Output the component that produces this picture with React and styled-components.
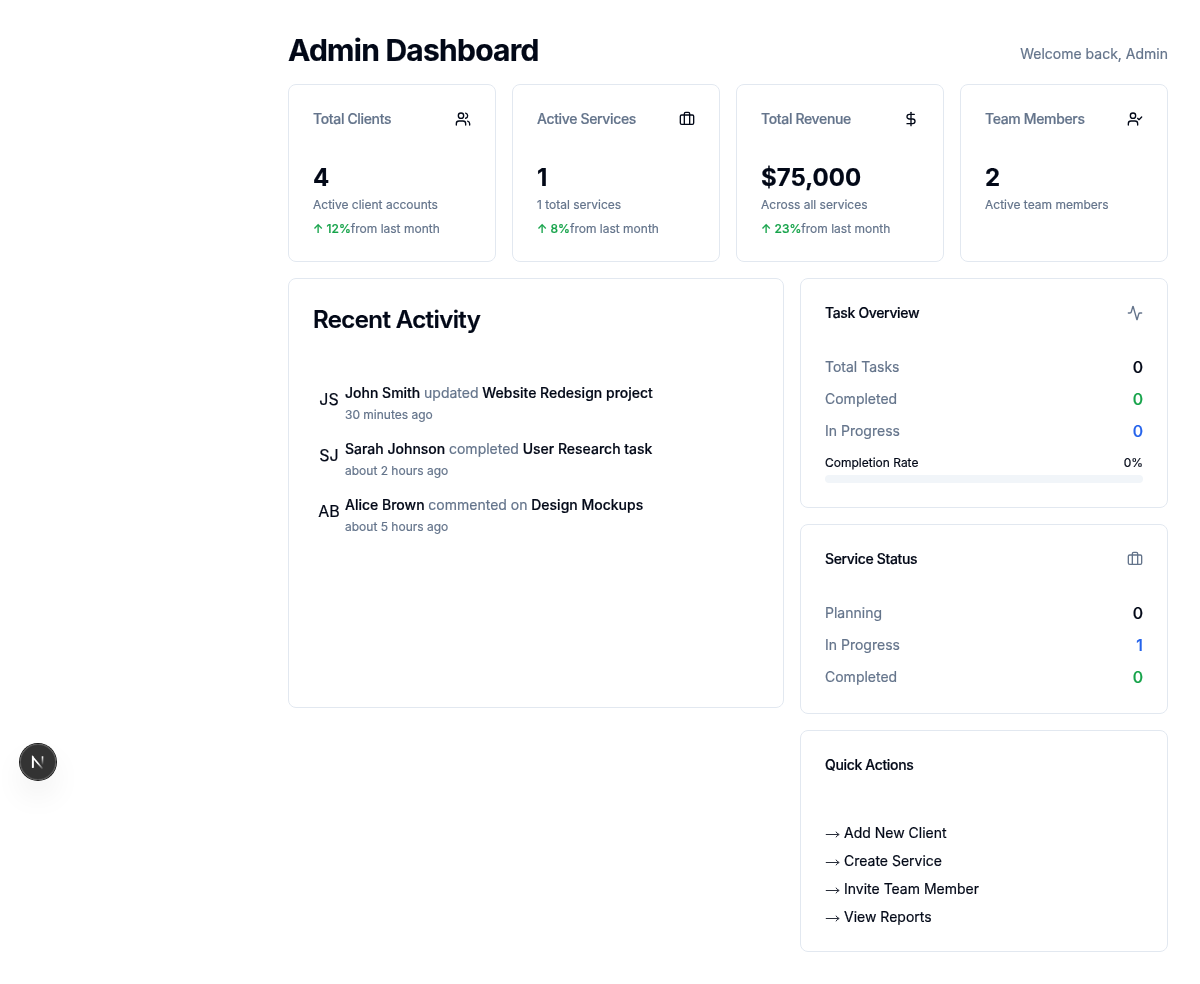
import React from 'react';
import styled, { createGlobalStyle } from 'styled-components';
import { Users, Briefcase, DollarSign, UserCheck, Activity } from 'lucide-react';

const GlobalStyle = createGlobalStyle`
  *, *::before, *::after { box-sizing: border-box; }
  body { margin: 0; background: #fff; color: #020817; font-family: Inter, sans-serif; font-size: 16px; line-height: 24px; -webkit-text-stroke: 0.2px; }
  h1, h2, h3, p { margin: 0; }
`;

const Main = styled.main`
  margin-left: 256px;
  padding: 32px;
  display: flex;
  flex-direction: column;
  gap: 16px;
  will-change: transform;
`;
const Header = styled.header`
  display: flex;
  justify-content: space-between;
  align-items: center;
`;
const Title = styled.h1`
  font-size: 30px;
  line-height: 36px;
  font-weight: 700;
  letter-spacing: -0.75px;
`;
const Welcome = styled.p`
  font-size: 14px;
  line-height: 20px;
  color: #64748b;
  padding-top: 8px;
`;
const Stats = styled.section`
  display: grid;
  grid-template-columns: repeat(4, 1fr);
  gap: 16px;
`;
const Card = styled.section`
  border: 1px solid #e2e8f0;
  border-radius: 8px;
  padding: 24px;
  height: ${(p) => p.$height}px;
`;
const CardHead = styled.div`
  display: flex;
  align-items: center;
  justify-content: space-between;
  height: 20px;
  margin-bottom: ${(p) => p.$space}px;
  color: ${(p) => p.$iconColor || 'inherit'};
`;
const CardTitle = styled.h3`
  font-size: 14px;
  line-height: 20px;
  font-weight: 500;
  letter-spacing: -0.35px;
  color: ${(p) => (p.$muted ? '#64748b' : '#020817')};
`;
const StatValue = styled.div`
  font-size: 24px;
  line-height: 32px;
  height: 32px;
  padding-top: 1px;
  font-weight: 700;
`;
const Caption = styled.p`
  font-size: 12px;
  line-height: 16px;
  color: #64748b;
  margin-top: ${(p) => p.$top || 0}px;
`;
const Growth = styled.span`
  color: #16a34a;
  font-weight: 500;
`;
const Columns = styled.div`
  display: grid;
  grid-template-columns: 496px 1fr;
  align-items: start;
  gap: 16px;
`;
const Side = styled.div`
  display: flex;
  flex-direction: column;
  gap: 16px;
`;
const ActivityTitle = styled.h2`
  font-size: 24px;
  line-height: 32px;
  height: 32px;
  padding-top: 1px;
  font-weight: 600;
  letter-spacing: -0.6px;
  margin-bottom: 48px;
`;
const Feed = styled.div`
  display: flex;
  flex-direction: column;
  gap: 16px;
`;
const Entry = styled.div`
  display: flex;
  height: 40px;
`;
const Initials = styled.div`
  width: 32px;
  height: 32px;
  display: flex;
  align-items: center;
  justify-content: center;
`;
const EntryLine = styled.p`
  font-size: 14px;
  line-height: 20px;
  font-weight: 500;
  span { font-weight: 400; color: #64748b; }
`;
const Metric = styled.div`
  display: flex;
  justify-content: space-between;
  align-items: center;
  height: 24px;
  margin-bottom: 8px;
`;
const MetricLabel = styled.span`
  font-size: 14px;
  line-height: 20px;
  color: #64748b;
`;
const MetricValue = styled.span`
  font-weight: 500;
  color: ${(p) => p.$color || '#020817'};
`;
const Rate = styled.div`
  display: flex;
  justify-content: space-between;
  font-size: 12px;
  line-height: 16px;
  padding-top: 4px;
  margin-bottom: 4px;
`;
const Track = styled.div`
  height: 8px;
  border-radius: 4px;
  background: #f1f5f9;
`;
const Actions = styled.div`
  display: flex;
  flex-direction: column;
  gap: 8px;
  font-size: 14px;
  line-height: 20px;
`;
const Action = styled.span`
  display: flex;
  gap: 4px;
  height: 20px;
`;
const DevBadge = styled.div`
  position: fixed;
  left: 20px;
  top: 744px;
  width: 36px;
  height: 36px;
  border-radius: 50%;
  background: rgba(0, 0, 0, 0.8);
  box-shadow: 0 0 0 1px #171717, inset 0 0 0 1px rgba(255, 255, 255, 0.14), 0 16px 32px -4px rgba(0, 0, 0, 0.1);
  svg { display: block; }
`;

const stats = [
  { title: 'Total Clients', Icon: Users, value: '4', note: 'Active client accounts', growth: '12%' },
  { title: 'Active Services', Icon: Briefcase, value: '1', note: '1 total services', growth: '8%' },
  { title: 'Total Revenue', Icon: DollarSign, value: '$75,000', note: 'Across all services', growth: '23%' },
  { title: 'Team Members', Icon: UserCheck, value: '2', note: 'Active team members' },
];
const feed = [
  ['JS', 'John Smith', 'updated', 'Website Redesign project', '30 minutes ago'],
  ['SJ', 'Sarah Johnson', 'completed', 'User Research task', 'about 2 hours ago'],
  ['AB', 'Alice Brown', 'commented on', 'Design Mockups', 'about 5 hours ago'],
];
const tasks = [['Total Tasks', '0'], ['Completed', '0', '#16a34a'], ['In Progress', '0', '#2563eb']];
const services = [['Planning', '0'], ['In Progress', '1', '#2563eb'], ['Completed', '0', '#16a34a']];
const actions = ['Add New Client', 'Create Service', 'Invite Team Member', 'View Reports'];

function Metrics({ rows }) {
  return rows.map(([label, value, color]) => (
    <Metric key={label}>
      <MetricLabel>{label}</MetricLabel>
      <MetricValue $color={color}>{value}</MetricValue>
    </Metric>
  ));
}

function ArrowIcon() {
  return (
    <svg width="15" height="20" viewBox="0 0 15 20" fill="none">
      <path d="M0.8 11.5H13" stroke="currentColor" strokeWidth="0.85" />
      <path d="M11 8.7C11.6 10 12.7 11 14.2 11.5C12.7 12 11.6 13 11 14.3" stroke="currentColor" strokeWidth="0.9" />
    </svg>
  );
}

export default function App() {
  return (
    <>
      <GlobalStyle />
      <Main>
        <Header>
          <Title>Admin Dashboard</Title>
          <Welcome>Welcome back, Admin</Welcome>
        </Header>
        <Stats>
          {stats.map(({ title, Icon, value, note, growth }) => (
            <Card key={title} $height={178}>
              <CardHead $space={32}>
                <CardTitle $muted>{title}</CardTitle>
                <Icon size={16} />
              </CardHead>
              <StatValue>{value}</StatValue>
              <Caption $top={4}>{note}</Caption>
              {growth && <Caption $top={8}><Growth>↑ {growth}</Growth>from last month</Caption>}
            </Card>
          ))}
        </Stats>
        <Columns>
          <Card $height={430}>
            <ActivityTitle>Recent Activity</ActivityTitle>
            <Feed>
              {feed.map(([initials, name, verb, target, time]) => (
                <Entry key={initials}>
                  <Initials>{initials}</Initials>
                  <div>
                    <EntryLine>{name} <span>{verb}</span> {target}</EntryLine>
                    <Caption $top={4}>{time}</Caption>
                  </div>
                </Entry>
              ))}
            </Feed>
          </Card>
          <Side>
            <Card $height={230}>
              <CardHead $space={32} $iconColor="#64748b">
                <CardTitle>Task Overview</CardTitle>
                <Activity size={16} />
              </CardHead>
              <Metrics rows={tasks} />
              <Rate><span>Completion Rate</span><span>0%</span></Rate>
              <Track />
            </Card>
            <Card $height={190}>
              <CardHead $space={32} $iconColor="#64748b">
                <CardTitle>Service Status</CardTitle>
                <Briefcase size={16} />
              </CardHead>
              <Metrics rows={services} />
            </Card>
            <Card $height={222}>
              <CardHead $space={48}>
                <CardTitle>Quick Actions</CardTitle>
              </CardHead>
              <Actions>
                {actions.map((a) => <Action key={a}><ArrowIcon /><span>{a}</span></Action>)}
              </Actions>
            </Card>
          </Side>
        </Columns>
      </Main>
      <DevBadge>
        <svg width="36" height="36" viewBox="0 0 36 36" fill="none">
          <defs>
            <linearGradient id="diagonal" x1="18" y1="19" x2="23" y2="25" gradientUnits="userSpaceOnUse">
              <stop stopColor="#fff" />
              <stop offset="0.75" stopColor="#fff" stopOpacity="0.3" />
              <stop offset="1" stopColor="#fff" stopOpacity="0" />
            </linearGradient>
            <linearGradient id="stem" x1="0" y1="12.5" x2="0" y2="21" gradientUnits="userSpaceOnUse">
              <stop stopColor="#fff" />
              <stop offset="1" stopColor="#fff" stopOpacity="0" />
            </linearGradient>
          </defs>
          <path d="M12.8 23.8V13.2L22.8 25" stroke="url(#diagonal)" strokeWidth="1.7" />
          <path d="M12.8 23.8V12.3" stroke="#fff" strokeWidth="1.7" />
          <path d="M22.5 12.3V22" stroke="url(#stem)" strokeWidth="1.6" />
        </svg>
      </DevBadge>
    </>
  );
}
